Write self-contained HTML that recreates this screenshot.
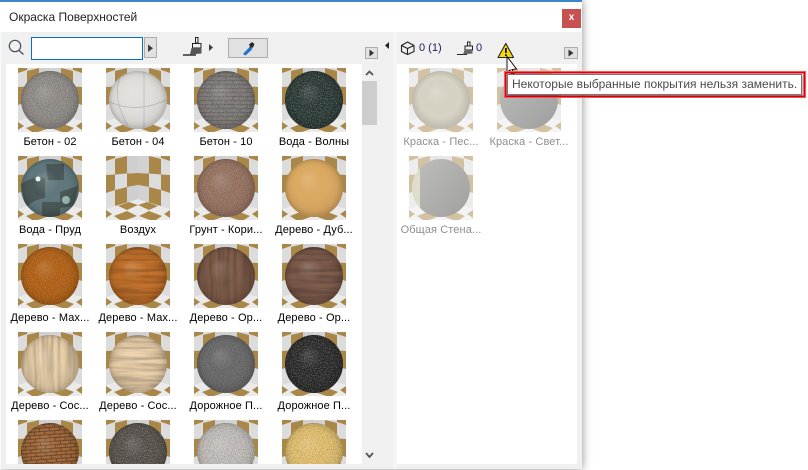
<!DOCTYPE html>
<html><head><meta charset="utf-8">
<style>
html,body{margin:0;padding:0;background:#fff;width:808px;height:470px;overflow:hidden}
body{position:relative;font-family:"Liberation Sans",sans-serif;font-size:12px;color:#000}
div,span{position:absolute;box-sizing:border-box}
.l{width:88px;text-align:center;white-space:nowrap;line-height:14px;height:14px;font-size:11px;letter-spacing:.1px}
.d{color:#8e8e8e}
.b{background:#e1e1e1;border:1px solid #adadad}
</style></head><body>
<div style="left:0;top:0;width:582px;height:469px;background:#f0f0f0;box-shadow:0 0 9px rgba(0,0,0,.45)"></div>
<div style="left:0;top:0;width:582px;height:2px;background:#3b87c9"></div>
<div style="left:0;top:2px;width:582px;height:30px;background:#fff"></div>
<div style="left:0;top:32px;width:1px;height:437px;background:#fafafa"></div>
<div style="left:9px;top:10px;line-height:15px;color:#222;white-space:nowrap">Окраска Поверхностей</div>
<div style="left:562px;top:9px;width:19px;height:19px;background:#c75050;color:#fff;font-weight:bold;font-size:10px;line-height:17px;text-align:center">x</div>
<div style="left:6px;top:64px;width:356px;height:400px;background:#fff"></div>
<div style="left:362px;top:81px;width:15px;height:44px;background:#cdcdcd"></div>
<div style="left:383px;top:32px;width:14px;height:437px;background:#f5f5f5"></div>
<div style="left:383px;top:32px;width:10px;height:437px;background:#f0f0f0"></div>
<div style="left:397px;top:64px;width:180px;height:400px;background:#fff"></div>
<div style="left:31px;top:37px;width:112px;height:23px;background:#fff;border:1.5px solid #0a70c4"></div>
<div class="b" style="left:144px;top:37px;width:13px;height:21px"></div>
<div class="b" style="left:228px;top:38px;width:40px;height:20px"></div>
<div class="b" style="left:365px;top:47px;width:13px;height:12px"></div>
<div class="b" style="left:564px;top:47px;width:14px;height:12px"></div>

<svg width="808" height="470" viewBox="0 0 808 470" style="position:absolute;left:0;top:0">
<defs>
<clipPath id="cl"><rect x="6" y="64" width="356" height="400"/></clipPath>
<clipPath id="sc"><circle cx="32" cy="32" r="29"/></clipPath>
<clipPath id="th"><rect width="64" height="64"/></clipPath>
<filter id="n" x="0" y="0" width="1" height="1" color-interpolation-filters="sRGB"><feTurbulence type="fractalNoise" baseFrequency=".85" numOctaves="2" seed="3" result="t"/><feColorMatrix in="t" type="matrix" values="0 0 0 0 0 0 0 0 0 0 0 0 0 0 0 .5 0 0 0 -.17" result="a"/><feComposite in="a" in2="SourceAlpha" operator="in" result="d"/><feMerge><feMergeNode in="SourceGraphic"/><feMergeNode in="d"/></feMerge></filter>
<filter id="s" x="0" y="0" width="1" height="1" color-interpolation-filters="sRGB"><feTurbulence type="fractalNoise" baseFrequency=".85" numOctaves="2" seed="8" result="t"/><feColorMatrix in="t" type="matrix" values="0 0 0 0 1 0 0 0 0 1 0 0 0 0 1 .9 0 0 0 -.4" result="a"/><feComposite in="a" in2="SourceAlpha" operator="in" result="d"/><feMerge><feMergeNode in="SourceGraphic"/><feMergeNode in="d"/></feMerge></filter>
<filter id="v" x="0" y="0" width="1" height="1" color-interpolation-filters="sRGB"><feTurbulence type="fractalNoise" baseFrequency=".3 .02" numOctaves="3" seed="5" result="t"/><feColorMatrix in="t" type="matrix" values="0 0 0 0 0 0 0 0 0 0 0 0 0 0 0 .4 0 0 0 -.14" result="a"/><feComposite in="a" in2="SourceAlpha" operator="in" result="d"/><feMerge><feMergeNode in="SourceGraphic"/><feMergeNode in="d"/></feMerge></filter>
<filter id="h" x="0" y="0" width="1" height="1" color-interpolation-filters="sRGB"><feTurbulence type="fractalNoise" baseFrequency=".02 .25" numOctaves="3" seed="9" result="t"/><feColorMatrix in="t" type="matrix" values="0 0 0 0 0 0 0 0 0 0 0 0 0 0 0 .5 0 0 0 -.16" result="a"/><feComposite in="a" in2="SourceAlpha" operator="in" result="d"/><feMerge><feMergeNode in="SourceGraphic"/><feMergeNode in="d"/></feMerge></filter>
<radialGradient id="sg" cx=".5" cy=".5" r=".5" fx=".38" fy=".33"><stop offset="0" stop-color="#fff" stop-opacity=".15"/><stop offset=".45" stop-color="#fff" stop-opacity="0"/><stop offset=".85" stop-color="#000" stop-opacity=".06"/><stop offset="1" stop-color="#000" stop-opacity=".2"/></radialGradient>
<radialGradient id="sl" cx=".5" cy=".5" r=".5" fx=".4" fy=".35"><stop offset="0" stop-color="#fff" stop-opacity=".1"/><stop offset=".7" stop-color="#000" stop-opacity=".02"/><stop offset="1" stop-color="#000" stop-opacity=".14"/></radialGradient>
<linearGradient id="ds" x1="0" y1="0" x2="1" y2="1"><stop offset="0" stop-color="#bdbdbb"/><stop offset="1" stop-color="#9e9e9c"/></linearGradient>
<pattern id="br" width="14" height="8" patternUnits="userSpaceOnUse"><path d="M0 .5H14M0 4.5H14M4 0V4M11 4V8" stroke="#000" stroke-opacity=".14" fill="none"/></pattern>
<pattern id="bk" width="10" height="7" patternUnits="userSpaceOnUse" patternTransform="rotate(-4 32 32)"><path d="M0 .5H10M0 4H10M3 0V3.5M8 3.5V7" stroke="#3a1f0c" stroke-opacity=".5" fill="none"/></pattern>
<g id="bg"><g clip-path="url(#th)">
<rect width="64" height="64" fill="#dcdcdc"/>
<g fill="#a98748"><path d="M0 0H9V2L0 5Z"/><path d="M9 3 21 0V17.5L9 18.5Z"/><path d="M0 19 9 18.5V34L0 37Z"/><path d="M21 17.5 32 17V29L21 31Z"/><path d="M9 34 21 31V47L9 50Z"/>
<path d="M64 0H55V2L64 5Z"/><path d="M55 3 43 0V17.5L55 18.5Z"/><path d="M64 19 55 18.5V34L64 37Z"/><path d="M43 17.5 32 17V29L43 31Z"/><path d="M55 34 43 31V47L55 50Z"/></g>
<path d="M21 0H32V17L21 17.500ZM21 31 32 29V43L21 47Z" fill="#cfcfcf"/><path d="M43 0H32V17L43 17.500ZM43 31 32 29V43L43 47Z" fill="#d2d2d2"/>
<path d="M0 53 32 43 64 53V64H0Z" fill="#eaeaea"/>
<g fill="#a98748"><path d="M12 50 23 46 32 49 21 54Z"/><path d="M52 50 41 46 32 49 43 54Z"/><path d="M8 60 21 55 31 60 20 64H14Z"/><path d="M56 60 43 55 33 60 44 64H50Z"/><path d="M0 54 6 58 0 62Z"/><path d="M64 54 58 58 64 62Z"/></g>
</g></g>
<circle id="ov" cx="32" cy="32" r="29" fill="url(#sg)"/>
</defs>

<g clip-path="url(#cl)">
<!-- row 1 -->
<g transform="translate(18,68)"><use href="#bg"/><circle cx="32" cy="32" r="29" fill="#9c9893" filter="url(#n)"/><use href="#ov"/></g>
<g transform="translate(106,68)"><use href="#bg"/><circle cx="32" cy="32" r="29" fill="#dfdedb"/><path d="M38 3V60M4 34Q30 46 60 32M14 10Q6 30 22 58" stroke="#b5b5b5" stroke-width=".7" fill="none" clip-path="url(#sc)"/><use href="#ov"/></g>
<g transform="translate(194,68)"><use href="#bg"/><circle cx="32" cy="32" r="29" fill="#8b8784" filter="url(#n)"/><circle cx="32" cy="32" r="29" fill="url(#br)"/><use href="#ov"/></g>
<g transform="translate(282,68)"><use href="#bg"/><circle cx="32" cy="32" r="29" fill="#24332f" filter="url(#s)"/><use href="#ov"/></g>
<!-- row 2 -->
<g transform="translate(18,156)"><use href="#bg"/><circle cx="32" cy="32" r="29" fill="#5f777c"/><g clip-path="url(#sc)" fill="#3f4a48" opacity=".7"><path d="M3 28Q14 20 27 22V42Q14 44 8 52Z"/><path d="M28 8H46V24H30ZM42 36 60 30 56 50 42 52ZM24 46H42V62H24Z"/></g><circle cx="20" cy="23" r="2.500" fill="#eef4f4"/><circle cx="48" cy="44" r="4" fill="#bfe0dc" opacity=".7"/><use href="#ov"/></g>
<g transform="translate(106,156)"><use href="#bg"/></g>
<g transform="translate(194,156)"><use href="#bg"/><circle cx="32" cy="32" r="29" fill="#a47e6c" filter="url(#n)"/><use href="#ov"/></g>
<g transform="translate(282,156)"><use href="#bg"/><circle cx="32" cy="32" r="29" fill="#dba961"/><use href="#ov"/></g>
<!-- row 3 -->
<g transform="translate(18,244)"><use href="#bg"/><circle cx="32" cy="32" r="29" fill="#c06c1e" filter="url(#n)"/><use href="#ov"/></g>
<g transform="translate(106,244)"><use href="#bg"/><circle cx="32" cy="32" r="29" fill="#c4722a" filter="url(#h)"/><use href="#ov"/></g>
<g transform="translate(194,244)"><use href="#bg"/><circle cx="32" cy="32" r="29" fill="#7f5c4a" filter="url(#v)"/><use href="#ov"/></g>
<g transform="translate(282,244)"><use href="#bg"/><circle cx="32" cy="32" r="29" fill="#7f5c4c" filter="url(#h)"/><use href="#ov"/></g>
<!-- row 4 -->
<g transform="translate(18,332)"><use href="#bg"/><circle cx="32" cy="32" r="29" fill="#e8cfa9" filter="url(#v)"/><use href="#ov"/></g>
<g transform="translate(106,332)"><use href="#bg"/><circle cx="32" cy="32" r="29" fill="#ecd1ab" filter="url(#h)"/><use href="#ov"/></g>
<g transform="translate(194,332)"><use href="#bg"/><circle cx="32" cy="32" r="29" fill="#747474" filter="url(#n)"/><use href="#ov"/></g>
<g transform="translate(282,332)"><use href="#bg"/><circle cx="32" cy="32" r="29" fill="#242424" filter="url(#s)"/><use href="#ov"/></g>
<!-- row 5 -->
<g transform="translate(18,420)"><use href="#bg"/><circle cx="32" cy="32" r="29" fill="#a06a3e"/><circle cx="32" cy="32" r="29" fill="url(#bk)"/><use href="#ov"/></g>
<g transform="translate(106,420)"><use href="#bg"/><circle cx="32" cy="32" r="29" fill="#4e4943" filter="url(#s)"/><use href="#ov"/></g>
<g transform="translate(194,420)"><use href="#bg"/><circle cx="32" cy="32" r="29" fill="#cdc9c5" filter="url(#n)"/><use href="#ov"/></g>
<g transform="translate(282,420)"><use href="#bg"/><circle cx="32" cy="32" r="29" fill="#eecb78" filter="url(#n)"/><use href="#ov"/></g>
</g>
<!-- right list -->
<g transform="translate(409,68)"><use href="#bg" opacity=".5"/><circle cx="32" cy="32" r="29" fill="#dbd8c9"/><circle cx="32" cy="32" r="29" fill="url(#sl)"/></g>
<g transform="translate(497,68)"><use href="#bg" opacity=".5"/><circle cx="32" cy="32" r="29" fill="url(#ds)"/></g>
<g transform="translate(409,156)"><use href="#bg" opacity=".5"/><circle cx="32" cy="32" r="29" fill="#dfdecb"/><path d="M11 0H64V64H11Z" fill="url(#ds)" clip-path="url(#sc)"/></g>

<!-- toolbar icons -->
<circle cx="15" cy="46" r="5.700" fill="none" stroke="#46505a" stroke-width="1.200"/><path d="M19 50.500 23.500 54.500" stroke="#46505a" stroke-width="1.300"/>
<path d="M148 44.500V52L153 48.200Z" fill="#3c3c3c"/>
<g fill="none" stroke="#222" stroke-width="1"><path d="M183 55H196" stroke-width="1.400"/><path d="M195.500 37.500H198V43H195.500ZM192.500 43.500H201V48H192.500Z"/></g><path d="M191.500 48H201.500V53.500L190 54.500Z" fill="#555"/>
<path d="M209 44V51L213 47.500Z" fill="#3c3c3c"/>
<path d="M243 54 250 46.500 252.500 49 245.500 55.500Z" fill="#1c74cf"/><path d="M249 44.500 252 42 254.500 44 253 47.500 250.500 48Z" fill="#2a2a2a"/>
<path d="M369.500 49.500V56.500L374 53Z" fill="#333"/>
<path d="M389 42V49L385 45.500Z" fill="#222"/>
<path d="M568.500 49.500V56.500L573.500 53Z" fill="#333"/>
<path d="M366 75 369.500 71.500 373 75" fill="none" stroke="#555" stroke-width="1.800"/>
<path d="M366 453 369.500 457 373 453" fill="none" stroke="#555" stroke-width="1.800"/>
<!-- cube -->
<g fill="none" stroke="#222" stroke-width="1.100"><path d="M407.500 42 414 45.500V51.500L407.500 54.500 401.500 51.500V45.500Z"/><path d="M401.500 45.500 407.500 48.500 414 45.500M407.500 48.500V54.500"/></g>
<!-- brush right -->
<g fill="none" stroke="#222" stroke-width="1"><path d="M457 54.500H467"/><path d="M467.500 42H470V46H467.500ZM465 46H472.500V50H465Z"/></g><path d="M464.500 50H472.500V53.500L463 54.500Z" fill="#666"/>
<!-- warning -->
<path d="M505.800 43.500 513.500 57.500H498Z" fill="#f6dc00" stroke="#222" stroke-width="1.100" stroke-linejoin="round"/><path d="M505 48H506.800V53H505ZM505 54.200H506.800V56H505Z" fill="#111"/>
<!-- cursor -->
<path d="M507 56.500V72L510 70 512 74.500 514 73.500 512 69.500 516.500 69Z" fill="#fff" stroke="#111" stroke-width="1"/>
</svg>

<div style="left:504px;top:71px;width:302px;height:27px;border:1px solid #f55;box-shadow:inset 0 0 0 1.500px #e3000f"></div>
<div style="left:507px;top:74px;width:295px;height:21px;background:#fff;border:1px solid #767676;box-shadow:1px 1px 2px rgba(0,0,0,.35)"></div>
<div style="left:512px;top:77px;line-height:15px;color:#4a4a4a;white-space:nowrap;letter-spacing:.02px">Некоторые выбранные покрытия нельзя заменить.</div>
<div style="left:419px;top:41px;line-height:15px;font-size:11px;color:#1b1b5e;white-space:nowrap">0 (1)</div>
<div style="left:476px;top:41px;line-height:15px;font-size:11px;color:#1b1b5e;white-space:nowrap">0</div>

<span class="l" style="left:6px;top:135px">Бетон - 02</span><span class="l" style="left:94px;top:135px">Бетон - 04</span><span class="l" style="left:182px;top:135px">Бетон - 10</span><span class="l" style="left:270px;top:135px">Вода - Волны</span>
<span class="l" style="left:6px;top:223px">Вода - Пруд</span><span class="l" style="left:94px;top:223px">Воздух</span><span class="l" style="left:182px;top:223px">Грунт - Кори...</span><span class="l" style="left:270px;top:223px">Дерево - Дуб...</span>
<span class="l" style="left:6px;top:311px">Дерево - Мах...</span><span class="l" style="left:94px;top:311px">Дерево - Мах...</span><span class="l" style="left:182px;top:311px">Дерево - Ор...</span><span class="l" style="left:270px;top:311px">Дерево - Ор...</span>
<span class="l" style="left:6px;top:399px">Дерево - Сос...</span><span class="l" style="left:94px;top:399px">Дерево - Сос...</span><span class="l" style="left:182px;top:399px">Дорожное П...</span><span class="l" style="left:270px;top:399px">Дорожное П...</span>
<span class="l d" style="left:397px;top:135px">Краска - Пес...</span><span class="l d" style="left:485px;top:135px">Краска - Свет...</span><span class="l d" style="left:397px;top:223px">Общая Стена...</span>
</body></html>
